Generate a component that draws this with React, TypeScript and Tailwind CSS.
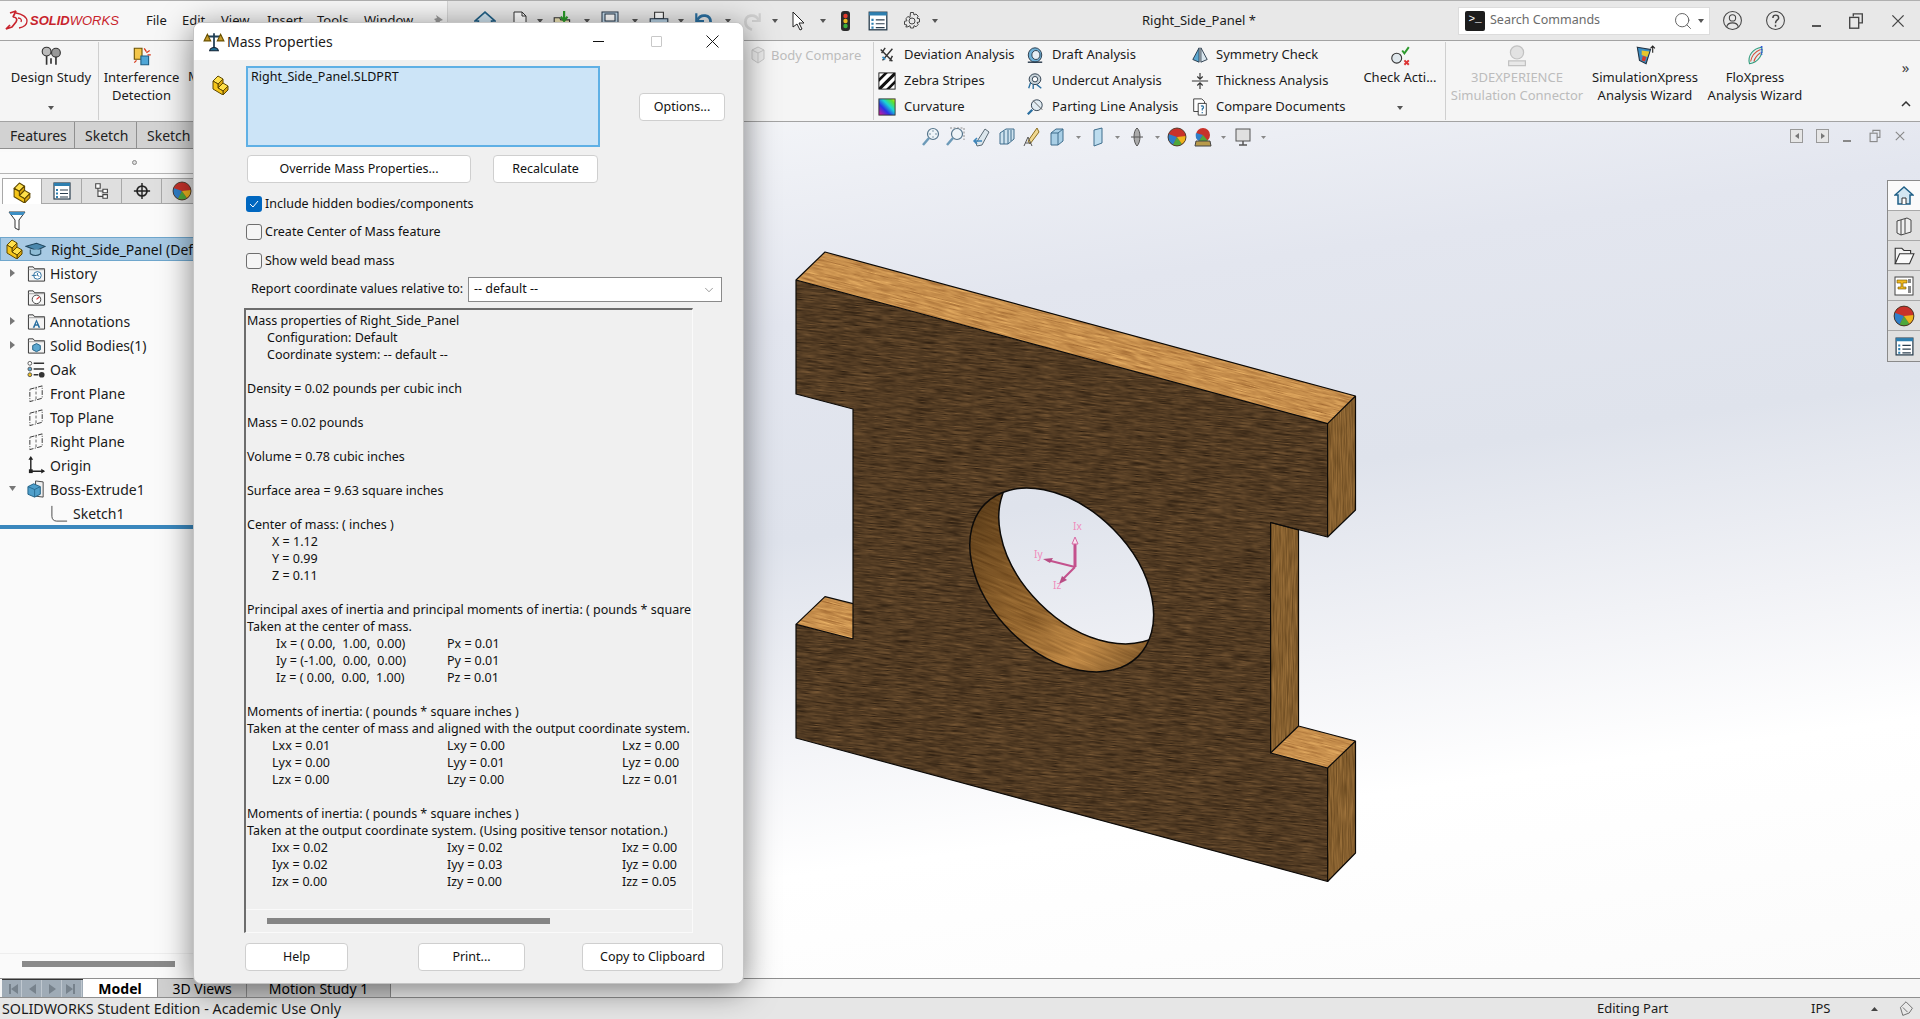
import type { ReactNode } from 'react';
import { ChevronDown, Search } from 'lucide-react';

const Ico = ({ s = 18, children }: { s?: number; children: ReactNode }) => (
  <svg width={s} height={s} viewBox="0 0 20 20" fill="none" className="shrink-0">
    {children}
  </svg>
);

const Caret = () => (
  <svg width="6" height="4" viewBox="0 0 6 4" className="shrink-0">
    <path d="M0 0h6L3 4z" fill="#555" />
  </svg>
);

const PartIcon = ({ s = 18 }: { s?: number }) => (
  <Ico s={s}>
    <g stroke="#5f4800" strokeWidth="1" strokeLinejoin="round">
      <path d="M2 6 7 1l5 3-5 5z" fill="#ffe04a" />
      <path d="M7 9l5-5v4l-5 5z" fill="#dba60f" />
      <path d="M7 13l5-5 5 3-5 5z" fill="#ffe04a" />
      <path d="M12 16l5-5v4l-5 5z" fill="#dba60f" />
      <path d="M2 6l5 3v4l5 3v4L2 14z" fill="#f5c518" />
    </g>
  </Ico>
);

const ListIcon = ({ s = 20 }: { s?: number }) => (
  <Ico s={s}>
    <rect x="2" y="2" width="16" height="16" fill="#fff" stroke="#2b3f4f" strokeWidth="1.2" />
    <rect x="2" y="2" width="16" height="3" fill="#2d7fb0" />
    <path d="M4 8h2v2H4zM4 11.500h2v2H4zM4 15h2v2H4z" fill="#2d7fb0" />
    <path d="M8 9h8M8 12.500h8M8 16h8" stroke="#2b3f4f" strokeWidth="1.1" />
  </Ico>
);

const TreeTabIcon = () => (
  <Ico>
    <path d="M3 2h5v5H3zM11 8h5v4h-5zM11 14h5v4h-5zM5.500 7v9H11M5.500 10H11" stroke="#444" strokeWidth="1.2" fill="#fff" />
  </Ico>
);

const Target = () => (
  <Ico>
    <circle cx="10" cy="10" r="5.500" stroke="#222" strokeWidth="2" />
    <path d="M10 1v18M1 10h18" stroke="#222" strokeWidth="1.6" />
  </Ico>
);

const Ball = ({ s = 20 }: { s?: number }) => (
  <Ico s={s}>
    <circle cx="10" cy="10" r="9" fill="#c8322a" />
    <path d="M10 10 1.500 7A9 9 0 0 0 6 18z" fill="#2f7fc8" />
    <path d="M10 10 6 18a9 9 0 0 0 9-1z" fill="#4fa83b" />
    <path d="M10 10l5 7a9 9 0 0 0 4-8z" fill="#eeb51d" />
    <circle cx="10" cy="10" r="9" stroke="#3a2a1a" strokeWidth=".8" />
  </Ico>
);

const Filter = () => (
  <svg width="18" height="20" viewBox="0 0 18 20">
    <path d="M1 1h16l-6 8v10l-4-2V9z" fill="#fff" stroke="#333" />
    <path d="M1 1h16l-2 3H3z" fill="#3d8fc4" />
  </svg>
);

const Folder = ({ children }: { children?: ReactNode }) => (
  <Ico s={19}>
    <path d="M1.500 18V3h5l1.500 2h10.500v13z" fill="#f4f4f4" stroke="#333" strokeWidth="1" />
    <path d="M1.500 6h17" stroke="#888" strokeWidth=".8" />
    {children}
  </Ico>
);

const Plane = () => (
  <Ico s={19}>
    <path d="M3 5.500 16 2v13L3 18.500z" stroke="#333" strokeWidth="1" strokeDasharray="5 1.500 1 1.500" />
    <path d="M9.500 3v15" stroke="#333" strokeWidth=".8" strokeDasharray="3 2" />
  </Ico>
);

const TreeArrow = ({ open }: { open?: boolean }) => (
  <svg width="7" height="8" viewBox="0 0 7 8">
    {open ? <path d="M0 1h7L3.500 6z" fill="#777" /> : <path d="M1 0l5 4-5 4z" fill="#777" />}
  </svg>
);

const treeRows: { label: string; arrow?: 'open' | 'closed'; icon: ReactNode }[] = [
  {
    label: 'History',
    arrow: 'closed',
    icon: (
      <Folder>
        <circle cx="11" cy="12" r="4" fill="#fff" stroke="#2a6fa0" />
        <path d="M5 12h5M11 9.500V12l2 1" stroke="#2a6fa0" />
      </Folder>
    ),
  },
  {
    label: 'Sensors',
    icon: (
      <Folder>
        <circle cx="10" cy="12" r="4.500" fill="#fff" stroke="#444" />
        <path d="M10 12l3-2.500" stroke="#d33" strokeWidth="1.300" />
      </Folder>
    ),
  },
  {
    label: 'Annotations',
    arrow: 'closed',
    icon: (
      <Folder>
        <path d="M10 7.500 6 16.500h2l.7-2h2.600l.7 2h2zM9.300 13l.7-2.500.7 2.500z" fill="#2a6fa0" />
      </Folder>
    ),
  },
  {
    label: 'Solid Bodies(1)',
    arrow: 'closed',
    icon: (
      <Folder>
        <path d="M10 8l4 2v4.500l-4 2-4-2V10z" fill="#5ba6cf" stroke="#1e5f85" />
      </Folder>
    ),
  },
  {
    label: 'Oak',
    icon: (
      <Ico s={19}>
        <circle cx="3" cy="3.500" r="2" fill="#fff" stroke="#555" />
        <circle cx="3" cy="9.500" r="2" fill="#5ba6cf" stroke="#555" />
        <circle cx="3" cy="15.500" r="2" fill="#f2c21e" stroke="#555" />
        <path d="M7 3.500h11M7 9.500h11M7 15.500h5" stroke="#333" strokeWidth="1.500" />
        <circle cx="15.500" cy="15.500" r="3" fill="#333" />
      </Ico>
    ),
  },
  { label: 'Front Plane', icon: <Plane /> },
  { label: 'Top Plane', icon: <Plane /> },
  { label: 'Right Plane', icon: <Plane /> },
  {
    label: 'Origin',
    icon: (
      <Ico s={19}>
        <path d="M4 2v14h14" stroke="#222" strokeWidth="1.500" />
        <path d="M4 0l2.500 4h-5zM19 16l-4 2.500v-5z" fill="#222" />
        <rect x="2" y="14" width="4" height="4" fill="#222" />
      </Ico>
    ),
  },
  {
    label: 'Boss-Extrude1',
    arrow: 'open',
    icon: (
      <Ico s={19}>
        <path d="M9 1l8 1v16l-8-1z" fill="#eee" stroke="#444" />
        <path d="M7 4l7 3v8l-6 3-7-3V7z" fill="#4f9fca" stroke="#1e5f85" />
        <path d="M1 7l7 3 6-3M8 10v8" stroke="#1e5f85" strokeWidth=".8" />
      </Ico>
    ),
  },
];

const tabs3 = ['Features', 'Sketch', 'Sketch'];

const LeftPanel = () => (
  <div className="relative flex w-[300px] shrink-0 flex-col bg-[#fafafa] text-[14px]">
    <div className="flex h-[27px] shrink-0 border-b border-[#8f8f8f] bg-[#d2d2d2] text-[#222]">
      {tabs3.map((t, i) => (
        <div
          key={i}
          className={`flex items-center border-r border-[#8f8f8f] pl-[10px] ${i === 0 ? 'w-[75px]' : 'w-[62px]'}`}
        >
          {t}
        </div>
      ))}
    </div>
    <div className="mt-[3px] flex h-[22px] shrink-0 items-center border-b border-[#b4b4b4] bg-[#fbfbfb] pl-[132px]">
      <div className="h-[5px] w-[5px] rounded-full border border-[#888] bg-[#ddd]" />
    </div>
    <div className="mt-[4px] flex h-[26px] shrink-0 pl-[2px]">
      <div className="flex w-[40px] items-center justify-center border-r border-t border-l border-[#a8a8a8] bg-white pt-[1px]">
        <PartIcon s={21} />
      </div>
      {[<ListIcon key="l" />, <TreeTabIcon key="t" />, <Target key="c" />, <Ball key="b" />].map((ic, i) => (
        <div key={i} className="flex w-[40px] items-center justify-center border-t border-r border-b border-[#a8a8a8] bg-[#dfdfdf]">
          {ic}
        </div>
      ))}
    </div>
    <div className="flex h-[33px] shrink-0 items-center pl-[8px]">
      <Filter />
    </div>
    <div className="flex h-[24px] shrink-0 items-center border border-[#6fa6cc] bg-[#a8cae4] pl-[4px] text-[#111]">
      <PartIcon s={20} />
      <Ico s={21}>
        <path d="M1 7l10-3 8 3-8 4z" fill="#4b88ad" stroke="#22485f" />
        <path d="M5 10v4c3 2 7 2 10 0v-4" stroke="#22485f" fill="#8fbcd6" />
      </Ico>
      <span className="ml-[5px] whitespace-nowrap">Right_Side_Panel (Default&lt;&lt;Default&gt;_Display)</span>
    </div>
    <div className="flex flex-col">
      {treeRows.map((r) => (
        <div key={r.label} className="flex h-[24px] items-center text-[#1b1b1b]">
          <div className="flex w-[27px] justify-center pr-[3px]">
            {r.arrow && <TreeArrow open={r.arrow === 'open'} />}
          </div>
          <div className="flex w-[23px]">{r.icon}</div>
          <span>{r.label}</span>
        </div>
      ))}
      <div className="flex h-[24px] items-center pl-[50px] text-[#1b1b1b]">
        <Ico s={19}>
          <path d="M2 2v11c0 3 2 5 5 5h11" stroke="#444" strokeWidth="1" />
        </Ico>
        <span className="ml-[4px]">Sketch1</span>
      </div>
    </div>
    <div className="h-[4px] shrink-0 bg-[#3a87bd]" />
    <div className="mt-auto mb-[5px] flex h-[20px] shrink-0 items-center border-t border-[#eee] pl-[22px]">
      <div className="h-[6px] w-[153px] bg-[#8a8a8a]" />
    </div>
  </div>
);

const RibbonStack = ({
  w,
  lines,
  icon,
  gray,
  dropdown,
  pl,
}: {
  w: string;
  lines: string[];
  icon: ReactNode;
  gray?: boolean;
  dropdown?: boolean;
  pl?: string;
}) => (
  <div className={`flex h-full shrink-0 flex-col items-center pt-[3px] ${w} ${pl ?? ''} ${gray ? 'text-[#bcbcbc]' : 'text-[#1b1b1b]'}`}>
    <div className="flex h-[24px] items-center">{icon}</div>
    {lines.map((l) => (
      <div key={l} className="whitespace-nowrap leading-[18px]">
        {l}
      </div>
    ))}
    {dropdown && (
      <div className="mt-auto mb-[11px]">
        <Caret />
      </div>
    )}
  </div>
);

const RibbonRow = ({ icon, label, gap }: { icon: ReactNode; label: string; gap: string }) => (
  <div className={`flex h-[26px] items-center whitespace-nowrap pl-[4px] ${gap}`}>
    {icon}
    <span>{label}</span>
  </div>
);

const Sep = () => <div className="my-[1px] w-px shrink-0 bg-[#cfcfcf]" />;

const Ribbon = () => (
  <div className="flex h-[82px] shrink-0 border-b border-t border-[#a3a3a3] bg-[#f5f5f5]">
    <RibbonStack
      w="w-[98px]"
      pl="pl-[4px]"
      lines={['Design Study']}
      dropdown
      icon={
        <Ico s={22}>
          <circle cx="6" cy="6" r="4" fill="#bbb" stroke="#333" />
          <circle cx="14.500" cy="7" r="4" fill="#999" stroke="#333" />
          <path d="M6 10v8M14.500 11v7M10 12v5" stroke="#333" strokeWidth="1.500" />
        </Ico>
      }
    />
    <Sep />
    <RibbonStack
      w="w-[85px]"
      lines={['Interference', 'Detection']}
      icon={
        <Ico s={22}>
          <path d="M3 3h7v10H3z" fill="#f3c64a" stroke="#6b5200" />
          <path d="M9 10h7v8H9z" fill="#4fa6d6" stroke="#1e5f85" />
          <path d="M12 3l2 3M17 5l-3 2M3 16l2-2M18 9h-3" stroke="#d83a1c" strokeWidth="1.200" />
        </Ico>
      }
    />
    <div className="w-[564px] shrink-0 pt-[26px] pl-[4px] text-[#1b1b1b]">Mass</div>
    <div className="flex w-[125px] shrink-0 items-start pt-[4px] text-[#bcbcbc]">
      <Ico s={20}>
        <path d="M4 5l6-3 6 3v9l-6 4-6-4z" stroke="#c9c9c9" fill="#ececec" />
        <path d="M4 5l6 3 6-3M10 8v10" stroke="#c9c9c9" />
      </Ico>
      <span className="ml-[3px] whitespace-nowrap leading-[20px]">Body Compare</span>
    </div>
    <Sep />
    <div className="w-[148px] shrink-0 pt-[1px] text-[#1b1b1b]">
      <RibbonRow
        gap="gap-[8px]"
        label="Deviation Analysis"
        icon={
          <Ico>
            <path d="M3 4l13 13M16 3 5 16M8 2l-4 6M16 11l-3 6" stroke="#333" strokeWidth="1.600" />
            <path d="M5 12l3 3" stroke="#3d8fc4" strokeWidth="2" />
          </Ico>
        }
      />
      <RibbonRow
        gap="gap-[8px]"
        label="Zebra Stripes"
        icon={
          <Ico>
            <rect x="1" y="1" width="18" height="18" fill="#fff" stroke="#111" />
            <path d="M1 7 7 1h4L1 11zM1 17 17 1h2v3L4 19H1zM9 19 19 9v4l-6 6z" fill="#111" />
          </Ico>
        }
      />
      <RibbonRow
        gap="gap-[8px]"
        label="Curvature"
        icon={
          <svg width="18" height="18" viewBox="0 0 20 20" className="shrink-0">
            <defs>
              <linearGradient id="curv" x1="0" y1="1" x2="1" y2="0">
                <stop offset="0" stopColor="#e4168f" />
                <stop offset=".35" stopColor="#2a33e6" />
                <stop offset=".6" stopColor="#19d6d6" />
                <stop offset=".85" stopColor="#5fe22a" />
                <stop offset="1" stopColor="#f2e51d" />
              </linearGradient>
            </defs>
            <rect x="1" y="1" width="18" height="18" fill="url(#curv)" stroke="#333" />
          </svg>
        }
      />
    </div>
    <div className="w-[165px] shrink-0 pt-[1px] text-[#1b1b1b]">
      <RibbonRow
        gap="gap-[8px]"
        label="Draft Analysis"
        icon={
          <Ico>
            <ellipse cx="10" cy="10" rx="7.500" ry="8" fill="#6fb0d6" stroke="#234" />
            <ellipse cx="11" cy="10" rx="4.500" ry="5" fill="#e6eef4" stroke="#234" />
            <path d="M2 18h16" stroke="#234" strokeWidth="1.500" />
          </Ico>
        }
      />
      <RibbonRow
        gap="gap-[8px]"
        label="Undercut Analysis"
        icon={
          <Ico>
            <ellipse cx="10" cy="8" rx="6.500" ry="6" fill="#c9d4da" stroke="#234" />
            <ellipse cx="10" cy="8" rx="3" ry="3" fill="#fff" stroke="#234" />
            <path d="M5 12l-2 6M12 14l5 4M8 14v5" stroke="#2a6fa0" strokeWidth="1.500" />
          </Ico>
        }
      />
      <RibbonRow
        gap="gap-[8px]"
        label="Parting Line Analysis"
        icon={
          <Ico>
            <circle cx="12" cy="8" r="6" fill="#e2ecf2" stroke="#234" />
            <path d="M7 13l-5 5" stroke="#2a6fa0" strokeWidth="2.500" />
            <path d="M8 3l10 10" stroke="#555" />
          </Ico>
        }
      />
    </div>
    <div className="w-[168px] shrink-0 pt-[1px] text-[#1b1b1b]">
      <RibbonRow
        gap="gap-[7px]"
        label="Symmetry Check"
        icon={
          <Ico>
            <path d="M9 2v16L2 15z" fill="#5ba6cf" stroke="#234" />
            <path d="M11 2v16l7-3z" fill="#d9e6ee" stroke="#234" />
          </Ico>
        }
      />
      <RibbonRow
        gap="gap-[7px]"
        label="Thickness Analysis"
        icon={
          <Ico>
            <path d="M10 1v6M7 5l3 3 3-3M10 19v-6M7 15l3-3 3 3" stroke="#333" strokeWidth="1.300" />
            <path d="M1 9h18v2H1z" fill="#888" />
          </Ico>
        }
      />
      <RibbonRow
        gap="gap-[7px]"
        label="Compare Documents"
        icon={
          <Ico>
            <path d="M3 1h9l3 3v11H3z" fill="#fff" stroke="#333" />
            <path d="M8 6h9v13H8z" fill="#fff" stroke="#333" />
            <path d="M11 9c3-1 4 2 1.500 3v2M12.500 15.500v1.500" stroke="#2a6fa0" strokeWidth="1.300" />
          </Ico>
        }
      />
    </div>
    <RibbonStack
      w="w-[90px]"
      lines={['Check Acti...']}
      dropdown
      icon={
        <Ico s={22}>
          <circle cx="7" cy="12" r="4.500" fill="#dfe7ec" stroke="#333" />
          <path d="M12 5l2 2.500 4-5.500" stroke="#2d9a2d" strokeWidth="1.800" />
          <path d="M14 14l4 4M18 14l-4 4" stroke="#d33" strokeWidth="1.800" />
        </Ico>
      }
    />
    <Sep />
    <RibbonStack
      w="w-[142px]"
      gray
      lines={['3DEXPERIENCE', 'Simulation Connector']}
      icon={
        <Ico s={24}>
          <circle cx="10" cy="7" r="5.500" fill="#e2e2e2" stroke="#c2c2c2" />
          <path d="M3 14h14v4H3z" fill="#e8e8e8" stroke="#c2c2c2" />
        </Ico>
      }
    />
    <RibbonStack
      w="w-[114px]"
      lines={['SimulationXpress', 'Analysis Wizard']}
      icon={
        <Ico s={22}>
          <path d="M3 2l12 2-4 13-6-3z" fill="#3d8fc4" stroke="#234" />
          <path d="M7 5l7 1-2 5-5-2z" fill="#e8c62a" />
          <path d="M8 10l3 1-1 4-3-1z" fill="#d63a2a" />
          <path d="M17 1v6M15 3l2-2 2 2" stroke="#222" />
        </Ico>
      }
    />
    <RibbonStack
      w="w-[106px]"
      lines={['FloXpress', 'Analysis Wizard']}
      icon={
        <Ico s={22}>
          <path d="M5 17C3 10 8 3 16 2c2 6-3 14-11 15z" fill="#dff0f2" stroke="#2f9a7a" />
          <path d="M6 15C7 9 10 6 15 4M9 15c1-4 3-6 6-8" stroke="#d8503a" />
          <path d="M16 1v8" stroke="#3355dd" strokeDasharray="1.500 1" strokeWidth="1.500" />
        </Ico>
      }
    />
    <div className="ml-auto flex w-[28px] shrink-0 flex-col items-center pt-[18px] pr-[1px] text-[#444]">
      <span className="text-[15px] leading-[16px]">»</span>
      <svg width="10" height="6" viewBox="0 0 10 6" className="mt-[26px]">
        <path d="M1 5l4-4 4 4" stroke="#333" strokeWidth="1.500" fill="none" />
      </svg>
    </div>
  </div>
);

const Box = ({ w, children }: { w: string; children?: ReactNode }) => (
  <div className={`flex shrink-0 items-center justify-center ${w}`}>{children}</div>
);

const TopBar = () => (
  <div className="flex h-[40px] shrink-0 border-t border-[#b0b0b0] bg-[#e8e8e8] text-[#1a1a1a]">
    <div className="flex h-full w-[448px] shrink-0 items-center border-r border-[#d4d4d4] bg-[#f7f7f7] pl-[5px]">
      <div className="flex w-[141px] shrink-0 items-center text-[#c8232c]">
        <svg width="23" height="21" viewBox="0 0 23 21" className="shrink-0">
          <path d="M5 3 11 1 8 7c3 0 5 2 3 5l-4 5-6 2 4-4" stroke="#c8232c" strokeWidth="1.700" fill="none" strokeLinejoin="bevel" />
          <path d="M11 3c6 1 11 4 11 8 0 3-3 6-8 7" stroke="#c8232c" strokeWidth="1.300" fill="none" />
          <path d="M13 8c3 0 4 2 3 4" stroke="#c8232c" strokeWidth="1.300" fill="none" />
        </svg>
        <span className="ml-[2px] text-[13px] leading-none font-['Liberation_Sans',sans-serif] font-bold italic">SOLID</span>
        <span className="text-[13px] leading-none font-['Liberation_Sans',sans-serif] italic">WORKS</span>
      </div>
      {['File', 'Edit', 'View', 'Insert', 'Tools', 'Window'].map((m, i) => (
        <span key={m} className={['w-[36px]', 'w-[39px]', 'w-[46px]', 'w-[50px]', 'w-[47px]', 'w-[66px]'][i]}>
          {m}
        </span>
      ))}
      <svg width="14" height="14" viewBox="0 0 14 14" className="shrink-0">
        <path d="M6 1l7 5-3 1-1 3-2-2-5 5 4-6-2-2 3-1z" fill="#9a9a9a" />
      </svg>
    </div>
    <div className="flex h-full flex-1 items-center pl-[19px]">
      <Box w="w-[36px]">
        <Ico s={22}>
          <path d="M10 2 1 10h3v8h12v-8h3z" fill="#cfe3ef" stroke="#1f5f86" strokeWidth="1.500" />
          <path d="M8 18v-5h4v5" stroke="#1f5f86" fill="#fff" />
        </Ico>
      </Box>
      <Box w="w-[34px]">
        <Ico s={20}>
          <path d="M4 1h8l4 4v14H4z" fill="#fff" stroke="#333" />
          <path d="M12 1v4h4" stroke="#333" />
        </Ico>
      </Box>
      <Box w="w-[6px]"><Caret /></Box>
      <Box w="w-[40px]">
        <Ico s={22}>
          <path d="M2 18V7h5l1 2h8v9z" fill="#f1e7b8" stroke="#333" />
          <path d="M11 1v8M8 6l3 4 3-4" stroke="#2a9a2a" strokeWidth="2" />
        </Ico>
      </Box>
      <Box w="w-[8px]"><Caret /></Box>
      <Box w="w-[38px]">
        <Ico s={20}>
          <rect x="2" y="1" width="16" height="18" fill="#c4dced" stroke="#234" />
          <rect x="5" y="3" width="10" height="7" fill="#fff" stroke="#234" />
          <rect x="6" y="13" width="8" height="6" fill="#5a7f9a" />
        </Ico>
      </Box>
      <Box w="w-[11px]"><Caret /></Box>
      <Box w="w-[38px]">
        <Ico s={22}>
          <path d="M6 2h8v6H6z" fill="#fff" stroke="#333" />
          <path d="M2 8h16v7H2z" fill="#b8d2e4" stroke="#234" />
          <path d="M5 12h10v6H5z" fill="#fff" stroke="#333" />
        </Ico>
      </Box>
      <Box w="w-[6px]"><Caret /></Box>
      <Box w="w-[40px]">
        <Ico s={22}>
          <path d="M3 3v7h7" stroke="#2a6fa0" strokeWidth="2" />
          <path d="M4 9c3-6 12-5 12 2 0 4-3 6-6 7" stroke="#2a6fa0" strokeWidth="2.500" />
        </Ico>
      </Box>
      <Box w="w-[8px]"><Caret /></Box>
      <Box w="w-[40px]">
        <Ico s={22}>
          <path d="M17 3v7h-7" stroke="#cfcfcf" strokeWidth="2" />
          <path d="M16 9c-3-6-12-5-12 2 0 4 3 6 6 7" stroke="#cfcfcf" strokeWidth="2.500" />
        </Ico>
      </Box>
      <Box w="w-[6px]"><Caret /></Box>
      <Box w="w-[40px]">
        <Ico s={20}>
          <path d="M5 1v15l4-3 3 6 2-1-3-6h5z" fill="#fff" stroke="#222" />
        </Ico>
      </Box>
      <Box w="w-[10px]"><Caret /></Box>
      <Box w="w-[34px]">
        <svg width="9" height="20" viewBox="0 0 9 20">
          <rect width="9" height="20" rx="3" fill="#2b2b2b" />
          <circle cx="4.500" cy="5" r="2.200" fill="#e23b2c" />
          <circle cx="4.500" cy="10" r="2.200" fill="#e8b81e" />
          <circle cx="4.500" cy="15" r="2.200" fill="#3cae3c" />
        </svg>
      </Box>
      <Box w="w-[32px]"><ListIcon s={22} /></Box>
      <Box w="w-[36px]">
        <Ico s={20}>
          <circle cx="10" cy="10" r="3" stroke="#444" />
          <path
            d="M8.500 1.500h3l.5 2.500 2-1 2.200 2.200-1.200 2 2.500.6v3.200l-2.500.5 1.200 2-2.200 2.300-2-1.200-.5 2.400h-3l-.5-2.400-2 1.200L3.800 16l1.200-2-2.500-.5v-3.200L5 9.700 3.800 7.700 6 5.500l2 1z"
            stroke="#444"
          />
        </Ico>
      </Box>
      <Box w="w-[10px]"><Caret /></Box>
      <div className="flex-1 text-center whitespace-nowrap">Right_Side_Panel *</div>
      <div className="flex h-[28px] w-[252px] shrink-0 items-center border border-[#dcdcdc] bg-white pl-[6px] text-[#6b6b6b]">
        <div className="flex h-[20px] w-[20px] shrink-0 items-center justify-center rounded-[2px] bg-[#1d1d1d] pb-[2px] text-[11px] leading-none font-['Liberation_Mono',monospace] text-white">
          &gt;_
        </div>
        <span className="ml-[5px] flex-1 text-[12.5px]">Search Commands</span>
        <Search size={20} strokeWidth={1.200} color="#666" />
        <div className="mx-[5px]"><Caret /></div>
      </div>
      <Box w="w-[44px]">
        <Ico s={21}>
          <circle cx="10" cy="10" r="8.500" stroke="#444" />
          <circle cx="10" cy="7.500" r="3" stroke="#444" />
          <path d="M4.500 16c1-5 10-5 11 0" stroke="#444" />
        </Ico>
      </Box>
      <Box w="w-[42px]">
        <Ico s={21}>
          <circle cx="10" cy="10" r="8.500" stroke="#444" />
          <path d="M7.500 7.500c0-3.500 5.500-3.500 5.500 0 0 2-3 2-3 5M10 14v2" stroke="#444" strokeWidth="1.400" />
        </Ico>
      </Box>
      <Box w="w-[40px]">
        <div className="mt-[10px] h-[2px] w-[9px] bg-[#555]" />
      </Box>
      <Box w="w-[40px]">
        <Ico s={18}>
          <path d="M7 5V2h10v10h-4" stroke="#444" strokeWidth="1.500" />
          <rect x="3" y="6" width="10" height="12" stroke="#444" strokeWidth="1.500" />
        </Ico>
      </Box>
      <Box w="w-[44px]">
        <Ico s={16}>
          <path d="M3 3l14 14M17 3 3 17" stroke="#444" strokeWidth="1.600" />
        </Ico>
      </Box>
    </div>
  </div>
);

const Part = () => (
  <svg viewBox="300 122 1620 856" className="absolute inset-0 h-full w-full">
    <defs>
      <filter id="woodFront" x="0" y="0" width="100%" height="100%" colorInterpolationFilters="sRGB">
        <feTurbulence type="fractalNoise" baseFrequency="0.05 1.1" numOctaves="3" seed="4" />
        <feColorMatrix values="0.42 0 0 0 0.11  0.32 0 0 0 0.07  0.2 0 0 0 0.035  0 0 0 0 1" />
      </filter>
      <filter id="woodTop" x="0" y="0" width="100%" height="100%" colorInterpolationFilters="sRGB">
        <feTurbulence type="fractalNoise" baseFrequency="0.04 0.9" numOctaves="3" seed="9" />
        <feColorMatrix values="0.42 0 0 0 0.57  0.42 0 0 0 0.35  0.3 0 0 0 0.15  0 0 0 0 1" />
      </filter>
      <filter id="woodSide" x="0" y="0" width="100%" height="100%" colorInterpolationFilters="sRGB">
        <feTurbulence type="fractalNoise" baseFrequency="0.8 0.04" numOctaves="2" seed="6" />
        <feColorMatrix values="0.3 0 0 0 0.37  0.24 0 0 0 0.25  0.16 0 0 0 0.1  0 0 0 0 1" />
      </filter>
      <filter id="woodHole" x="0" y="0" width="100%" height="100%" colorInterpolationFilters="sRGB">
        <feTurbulence type="fractalNoise" baseFrequency="0.03 0.45" numOctaves="2" seed="2" />
        <feColorMatrix values="0.4 0 0 0 0.45  0.34 0 0 0 0.28  0.22 0 0 0 0.1  0 0 0 0 1" />
      </filter>
      <linearGradient id="holeLight" x1="960" y1="500" x2="1150" y2="680" gradientUnits="userSpaceOnUse">
        <stop offset="0" stopColor="#2e1c08" stopOpacity=".7" />
        <stop offset=".45" stopColor="#4a2f10" stopOpacity=".25" />
        <stop offset=".72" stopColor="#e2a55a" stopOpacity=".35" />
        <stop offset="1" stopColor="#2e1c08" stopOpacity=".65" />
      </linearGradient>
      <clipPath id="frontClip">
        <path d="M796 280 1327.600 423.600V537L1270.600 522.500V753L1327.600 768V881.500L796 738V624.400L853 639V409L796 394Z" />
      </clipPath>
      <clipPath id="topClip">
        <path d="M796 280 825 252 1355.500 396 1327.600 423.600ZM796 624.400 825 596.600 853 603.700V639ZM1270.600 753 1298.500 726 1355.500 741 1327.600 768Z" />
      </clipPath>
      <clipPath id="sideClip">
        <path d="M1327.600 423.600 1355.500 396V510L1327.600 537ZM1327.600 768 1355.500 741V853L1327.600 881.500ZM1270.600 522.500 1298.500 530V726L1270.600 753Z" />
      </clipPath>
      <clipPath id="outerClip">
        <ellipse cx="1061.700" cy="580" rx="108" ry="72.400" transform="rotate(45 1061.700 580)" />
      </clipPath>
      <mask id="punchOuter" maskUnits="userSpaceOnUse" x="700" y="200" width="800" height="800">
        <rect x="700" y="200" width="800" height="800" fill="#fff" />
        <ellipse cx="1061.700" cy="580" rx="108" ry="72.400" transform="rotate(45 1061.700 580)" fill="#000" />
      </mask>
      <mask id="punchInner" maskUnits="userSpaceOnUse" x="700" y="200" width="800" height="800">
        <rect x="700" y="200" width="800" height="800" fill="#fff" />
        <ellipse cx="1090.700" cy="552" rx="108" ry="72.400" transform="rotate(45 1090.700 552)" fill="#000" />
      </mask>
    </defs>

    <g clipPath="url(#topClip)">
      <rect x="700" y="100" width="800" height="800" filter="url(#woodTop)" transform="rotate(14 1075 400)" />
    </g>
    <g clipPath="url(#sideClip)">
      <rect x="1200" y="350" width="200" height="560" filter="url(#woodSide)" />
    </g>
    <g mask="url(#punchOuter)">
      <g clipPath="url(#frontClip)">
        <rect x="650" y="100" width="900" height="900" filter="url(#woodFront)" transform="rotate(5 1075 580)" />
      </g>
    </g>
    <g clipPath="url(#outerClip)">
      <g mask="url(#punchInner)">
        <rect x="900" y="430" width="340" height="300" filter="url(#woodHole)" transform="rotate(22 1060 580)" />
        <rect x="940" y="470" width="240" height="230" fill="url(#holeLight)" />
      </g>
    </g>

    <g fill="none" stroke="#0c0a08" strokeWidth="1.200" strokeLinejoin="round">
      <path d="M796 280 1327.600 423.600V537L1270.600 522.500V753L1327.600 768V881.500L796 738V624.400L853 639V409L796 394Z" />
      <path d="M796 280 825 252 1355.500 396 1327.600 423.600M1355.500 396V510L1327.600 537" />
      <path d="M1270.600 522.500 1298.500 530V726L1270.600 753M1298.500 726 1355.500 741 1327.600 768M1355.500 741V853L1327.600 881.500" />
      <path d="M796 624.400 825 596.600 853 603.700" />
      <ellipse cx="1061.700" cy="580" rx="108" ry="72.400" transform="rotate(45 1061.700 580)" strokeWidth="1.500" />
    </g>
    <g clipPath="url(#outerClip)">
      <ellipse cx="1090.700" cy="552" rx="108" ry="72.400" transform="rotate(45 1090.700 552)" fill="none" stroke="#0c0a08" strokeWidth="1.500" />
    </g>

    <g stroke="#c4518d" fill="none">
      <path d="M1075 567V543" strokeWidth="3" />
      <path d="M1075 567 1047 560" strokeWidth="2.200" />
      <path d="M1075 567 1062 580" strokeWidth="2.200" />
    </g>
    <path d="M1075 537l-3 7h6z" fill="#f9e3ef" stroke="#d76aa4" />
    <path d="M1043 559l10-1-3 5z" fill="#b84d84" />
    <path d="M1059 584l3-8 5 4z" fill="#b84d84" />
    <g fill="#f08cbc" fontSize="10" fontFamily="Noto Sans, sans-serif">
      <text x="1073" y="530">Ix</text>
      <text x="1034" y="558">Iy</text>
      <text x="1053" y="589">Iz</text>
    </g>
  </svg>
);

const Magnifier = ({ children }: { children?: ReactNode }) => (
  <Ico s={20}>
    <circle cx="12" cy="7" r="5.500" fill="#eef4f8" stroke="#54748b" strokeWidth="1.200" />
    <path d="M8 11l-6 7" stroke="#6c9ab8" strokeWidth="2.500" />
    {children}
  </Ico>
);

const HudCaret = ({ w }: { w: string }) => (
  <Box w={w}>
    <svg width="5" height="3" viewBox="0 0 5 3">
      <path d="M0 0h5L2.500 3z" fill="#888" />
    </svg>
  </Box>
);

const HeadsUp = () => (
  <div className="absolute top-[5px] left-[619px] flex h-[20px] items-center">
    <Box w="w-[23px]">
      <Magnifier>
        <path d="M12 3.500v1M12 9.500v1M8.500 7h1M14.500 7h1" stroke="#54748b" strokeWidth="1.300" />
      </Magnifier>
    </Box>
    <Box w="w-[26px]">
      <Magnifier>
        <path d="M5 1h14v12" stroke="#777" strokeWidth=".8" strokeDasharray="2 1.500" />
      </Magnifier>
    </Box>
    <Box w="w-[26px]">
      <Ico s={20}>
        <path d="M5 16 14 2l4 3-7 13-5 1z" fill="#dce6ec" stroke="#5a6a74" />
        <path d="M11 14H3M6 11l-3 3 3 3" stroke="#3d86bb" strokeWidth="1.500" />
      </Ico>
    </Box>
    <Box w="w-[25px]">
      <Ico s={20}>
        <path d="M3 6l6-4h8v10l-6 5H3z" fill="#cfe3ef" stroke="#3f6d8c" />
        <path d="M7 4v13M11 3v14M14 3v11" stroke="#3f6d8c" />
      </Ico>
    </Box>
    <Box w="w-[26px]">
      <Ico s={20}>
        <path d="M15 1 6 14l2 3 9-12z" fill="#f0d890" stroke="#8a6d20" />
        <path d="M2 19l4-9 4 9M3.500 16h5" stroke="#555" />
      </Ico>
    </Box>
    <Box w="w-[24px]">
      <Ico s={20}>
        <path d="M4 6l5-4h7v12l-5 4H4z" fill="#a9cfe6" stroke="#3f6d8c" />
        <path d="M4 6h7v12M11 6l5-4" stroke="#3f6d8c" />
      </Ico>
    </Box>
    <HudCaret w="w-[18px]" />
    <Box w="w-[23px]">
      <Ico s={20}>
        <path d="M5 3l8-2v15l-8 3z" fill="#bcdcee" stroke="#3f6d8c" />
      </Ico>
    </Box>
    <HudCaret w="w-[14px]" />
    <Box w="w-[26px]">
      <Ico s={20}>
        <path d="M10 1c-4 3-4 14 0 18 4-4 4-15 0-18z" fill="#aaa" stroke="#555" />
        <path d="M4 10h12" stroke="#555" />
      </Ico>
    </Box>
    <HudCaret w="w-[14px]" />
    <Box w="w-[26px]"><Ball s={20} /></Box>
    <Box w="w-[26px]">
      <Ico s={20}>
        <circle cx="10" cy="8" r="7" fill="#c8322a" />
        <path d="M10 8 3 6a7 7 0 0 0 3 8z" fill="#2f7fc8" />
        <path d="M10 8l-4 6a7 7 0 0 0 9 0z" fill="#4fa83b" />
        <path d="M3 14l-1 5h16l-1-5z" fill="#b89a4a" stroke="#444" />
      </Ico>
    </Box>
    <HudCaret w="w-[14px]" />
    <Box w="w-[26px]">
      <Ico s={20}>
        <rect x="3" y="2" width="14" height="12" fill="#e0e0e0" stroke="#555" />
        <path d="M10 14v4M6 18h8" stroke="#555" strokeWidth="1.500" />
      </Ico>
    </Box>
    <HudCaret w="w-[14px]" />
  </div>
);

const DocButtons = () => (
  <div className="absolute top-[7px] right-[14px] flex items-center">
    <div className="flex h-[14px] w-[13px] items-center justify-center border border-[#999] bg-[#e6e6e6]">
      <svg width="4" height="6" viewBox="0 0 4 6"><path d="M4 0v6L0 3z" fill="#777" /></svg>
    </div>
    <div className="ml-[13px] flex h-[14px] w-[13px] items-center justify-center border border-[#999] bg-[#e6e6e6]">
      <svg width="4" height="6" viewBox="0 0 4 6"><path d="M0 0v6l4-3z" fill="#777" /></svg>
    </div>
    <div className="mt-[10px] ml-[14px] h-[2px] w-[8px] bg-[#888]" />
    <div className="ml-[17px]">
      <Ico s={14}>
        <path d="M7 5V2h10v10h-4" stroke="#888" strokeWidth="1.600" />
        <rect x="3" y="6" width="10" height="12" stroke="#888" strokeWidth="1.600" />
      </Ico>
    </div>
    <div className="ml-[12px]">
      <Ico s={12}>
        <path d="M3 3l14 14M17 3 3 17" stroke="#888" strokeWidth="1.800" />
      </Ico>
    </div>
  </div>
);

const TaskPane = () => (
  <div className="absolute top-[58px] right-0 flex w-[33px] flex-col border-b border-l border-t border-[#8a8a8a]">
    <div className="flex h-[30px] items-center justify-center border-b border-[#a8a8a8] bg-[#fafafa]">
      <Ico s={20}>
        <path d="M10 1 1 9h3v9h12V9h3z" fill="#d3e6f1" stroke="#1f5f86" strokeWidth="1.500" />
        <path d="M8 18v-6h4v6" stroke="#333" fill="#fff" />
      </Ico>
    </div>
    <div className="flex h-[30px] items-center justify-center border-b border-[#a8a8a8] bg-[#e0e0e0]">
      <Ico s={20}>
        <path d="M3 5l10-3 4 2v12l-10 3-4-2z" fill="#f0f0f0" stroke="#444" />
        <path d="M7 4v15M11 3v14" stroke="#444" />
      </Ico>
    </div>
    <div className="flex h-[30px] items-center justify-center border-b border-[#a8a8a8] bg-[#e0e0e0]">
      <Ico s={22}>
        <path d="M2 17V3h6l2 2h6v3" stroke="#333" fill="#f3f3f3" />
        <path d="M2 17 6 8h13l-4 9z" fill="#fafafa" stroke="#333" />
      </Ico>
    </div>
    <div className="flex h-[30px] items-center justify-center border-b border-[#a8a8a8] bg-[#e0e0e0]">
      <Ico s={20}>
        <rect x="1" y="1" width="18" height="18" fill="#fff" stroke="#444" />
        <path d="M3 4h10v3H9v4h3v2H4v-2h3V7H3z" fill="#f1b81e" stroke="#6b5200" strokeWidth=".6" />
        <path d="M14 3h3v4h-3zM14 10h3v7h-3z" fill="#888" />
      </Ico>
    </div>
    <div className="flex h-[30px] items-center justify-center border-b border-[#a8a8a8] bg-[#e0e0e0]">
      <Ball s={22} />
    </div>
    <div className="flex h-[30px] items-center justify-center bg-[#e0e0e0]">
      <ListIcon s={21} />
    </div>
  </div>
);

const DlgBtn = ({ w, label }: { w: string; label: string }) => (
  <div className={`flex h-[28px] shrink-0 items-center justify-center rounded-[4px] border border-[#cfcfcf] bg-white ${w}`}>
    {label}
  </div>
);

const Check = ({ label, checked, mt }: { label: string; checked?: boolean; mt: string }) => (
  <div className={`flex h-[16px] items-center ${mt}`}>
    {checked ? (
      <div className="flex h-[16px] w-[16px] items-center justify-center rounded-[3px] bg-[#0067c0]">
        <svg width="10" height="8" viewBox="0 0 10 8">
          <path d="M1 4l3 3 5-6" stroke="#fff" strokeWidth="1" fill="none" />
        </svg>
      </div>
    ) : (
      <div className="h-[16px] w-[16px] rounded-[3px] border border-[#6e6e6e] bg-[#f5f5f5]" />
    )}
    <span className="ml-[3px]">{label}</span>
  </div>
);

type Line = { t?: string; pl?: string; cols?: string[]; kind?: 'p' | 'm' };

const report: Line[] = [
  { t: 'Mass properties of Right_Side_Panel' },
  { t: 'Configuration: Default', pl: 'pl-[20px]' },
  { t: 'Coordinate system: -- default --', pl: 'pl-[20px]' },
  {},
  { t: 'Density = 0.02 pounds per cubic inch' },
  {},
  { t: 'Mass = 0.02 pounds' },
  {},
  { t: 'Volume = 0.78 cubic inches' },
  {},
  { t: 'Surface area = 9.63 square inches' },
  {},
  { t: 'Center of mass: ( inches )' },
  { t: 'X = 1.12', pl: 'pl-[25px]' },
  { t: 'Y = 0.99', pl: 'pl-[25px]' },
  { t: 'Z = 0.11', pl: 'pl-[25px]' },
  {},
  { t: 'Principal axes of inertia and principal moments of inertia: ( pounds * square' },
  { t: 'Taken at the center of mass.' },
  { kind: 'p', cols: ['Ix = ( 0.00,  1.00,  0.00)', 'Px = 0.01'] },
  { kind: 'p', cols: ['Iy = (-1.00,  0.00,  0.00)', 'Py = 0.01'] },
  { kind: 'p', cols: ['Iz = ( 0.00,  0.00,  1.00)', 'Pz = 0.01'] },
  {},
  { t: 'Moments of inertia: ( pounds * square inches )' },
  { t: 'Taken at the center of mass and aligned with the output coordinate system.' },
  { kind: 'm', cols: ['Lxx = 0.01', 'Lxy = 0.00', 'Lxz = 0.00'] },
  { kind: 'm', cols: ['Lyx = 0.00', 'Lyy = 0.01', 'Lyz = 0.00'] },
  { kind: 'm', cols: ['Lzx = 0.00', 'Lzy = 0.00', 'Lzz = 0.01'] },
  {},
  { t: 'Moments of inertia: ( pounds * square inches )' },
  { t: 'Taken at the output coordinate system. (Using positive tensor notation.)' },
  { kind: 'm', cols: ['Ixx = 0.02', 'Ixy = 0.02', 'Ixz = 0.00'] },
  { kind: 'm', cols: ['Iyx = 0.02', 'Iyy = 0.03', 'Iyz = 0.00'] },
  { kind: 'm', cols: ['Izx = 0.00', 'Izy = 0.00', 'Izz = 0.05'] },
];

const ReportLine = ({ l }: { l: Line }) => {
  if (l.cols && l.kind === 'p')
    return (
      <div className="flex h-[17px] pl-[29px] whitespace-pre">
        <span className="w-[171px]">{l.cols[0]}</span>
        <span>{l.cols[1]}</span>
      </div>
    );
  if (l.cols)
    return (
      <div className="flex h-[17px] pl-[25px] whitespace-pre">
        <span className="w-[175px]">{l.cols[0]}</span>
        <span className="w-[175px]">{l.cols[1]}</span>
        <span>{l.cols[2]}</span>
      </div>
    );
  return <div className={`h-[17px] whitespace-pre ${l.pl ?? ''}`}>{l.t}</div>;
};

const MassDialog = () => (
  <div className="absolute top-[22px] left-[193px] flex h-[962px] w-[551px] flex-col overflow-hidden rounded-[8px] border border-[#c4c4c4] bg-[#f0f0f0] text-[12.5px] text-[#111] shadow-[0_6px_32px_rgba(0,0,0,0.5)]">
    <div className="flex h-[37px] shrink-0 items-center bg-white pl-[9px]">
      <Ico s={22}>
        <path d="M10 2v13M3 5h14" stroke="#1f3f55" strokeWidth="1.600" />
        <path d="M1 9h6l-3-6zM13 9h6l-3-6z" fill="#c49a2a" stroke="#6b5200" />
        <path d="M6 18c1-4 7-4 8 0z" fill="#1f6f96" stroke="#123" />
      </Ico>
      <span className="ml-[2px] flex-1 text-[14px] text-[#1b1b1b]">Mass Properties</span>
      <div className="flex w-[58px] justify-center">
        <div className="h-px w-[11px] bg-[#111]" />
      </div>
      <div className="flex w-[58px] justify-center">
        <div className="h-[11px] w-[11px] rounded-[1px] border border-[#c8c8c8]" />
      </div>
      <div className="flex w-[58px] justify-center pr-[3px]">
        <Ico s={15}>
          <path d="M2 2l16 16M18 2 2 18" stroke="#111" strokeWidth="1.300" />
        </Ico>
      </div>
    </div>
    <div className="flex flex-1 flex-col pl-[52px]">
      <div className="mt-[6px] flex">
        <div className="absolute top-[52px] left-[17px]"><PartIcon s={20} /></div>
        <div className="h-[81px] w-[354px] shrink-0 border-2 border-[#5fb0e5] bg-[#cce4f7] pl-[3px] leading-[17px]">
          Right_Side_Panel.SLDPRT
        </div>
        <div className="mt-[27px] ml-[39px]"><DlgBtn w="w-[86px]" label="Options..." /></div>
      </div>
      <div className="mt-[8px] flex pl-[1px]">
        <DlgBtn w="w-[224px]" label="Override Mass Properties..." />
        <div className="ml-[22px]"><DlgBtn w="w-[105px]" label="Recalculate" /></div>
      </div>
      <Check checked label="Include hidden bodies/components" mt="mt-[13px]" />
      <Check label="Create Center of Mass feature" mt="mt-[12px]" />
      <Check label="Show weld bead mass" mt="mt-[13px]" />
      <div className="mt-[8px] flex h-[25px] items-center pl-[5px]">
        <span className="w-[217px] shrink-0 whitespace-nowrap">Report coordinate values relative to:</span>
        <div className="flex h-[25px] w-[254px] items-center justify-between border border-[#8a8a8a] bg-white px-[5px]">
          <span>-- default --</span>
          <ChevronDown size={14} strokeWidth={1} color="#555" />
        </div>
      </div>
      <div className="mt-[6px] -ml-[2px] flex h-[625px] w-[449px] flex-col border-t-2 border-r border-b border-l-2 border-t-[#6d6d6d] border-r-[#fafafa] border-b-[#fafafa] border-l-[#6d6d6d]">
        <div className="h-[599px] overflow-hidden pt-[2px] pl-[1px]">
          {report.map((l, i) => (
            <ReportLine key={i} l={l} />
          ))}
        </div>
        <div className="flex flex-1 items-center border-t border-[#fafafa] pl-[21px]">
          <div className="h-[6px] w-[283px] bg-[#858585]" />
        </div>
      </div>
      <div className="-ml-[1px] mt-[10px] flex">
        <DlgBtn w="w-[103px]" label="Help" />
        <div className="ml-[70px]"><DlgBtn w="w-[107px]" label="Print..." /></div>
        <div className="ml-[57px]"><DlgBtn w="w-[141px]" label="Copy to Clipboard" /></div>
      </div>
    </div>
  </div>
);

const BottomTabs = () => (
  <div className="flex h-[20px] shrink-0 border-y border-[#8f8f8f] bg-[#f6f6f6] text-[14px]">
    <div className="ml-[2px] flex w-[81px] border-t border-[#333] bg-[#9fabb6]">
      {['M6 0v10H4V0zM6 5l7-5v10z', 'M4 5l7-5v10z', 'M11 5 4 0v10z', 'M8 0v10h2V0zM8 5 1 0v10z'].map((d) => (
        <div key={d} className="flex w-[20px] items-center justify-center border-r border-[#c0c8d0]">
          <svg width="14" height="10" viewBox="0 0 14 10">
            <path d={d} fill="#77828c" />
          </svg>
        </div>
      ))}
    </div>
    <div className="flex w-[75px] items-center justify-center border-r border-[#8f8f8f] bg-white font-bold">Model</div>
    <div className="flex w-[89px] items-center justify-center border-r border-[#8f8f8f] bg-[#d0d0d0]">3D Views</div>
    <div className="flex w-[144px] items-center justify-center border-r border-[#8f8f8f] bg-[#d0d0d0]">Motion Study 1</div>
  </div>
);

const StatusBar = () => (
  <div className="flex h-[21px] shrink-0 items-center bg-[#e6e6e6] pl-[2px] text-[#1a1a1a]">
    <span className="w-[1595px] shrink-0 text-[14.3px]">SOLIDWORKS Student Edition - Academic Use Only</span>
    <span className="w-[214px] shrink-0">Editing Part</span>
    <span className="w-[60px] shrink-0">IPS</span>
    <svg width="7" height="4" viewBox="0 0 7 4" className="shrink-0">
      <path d="M0 4h7L3.500 0z" fill="#444" />
    </svg>
    <div className="ml-[20px]">
      <Ico s={16}>
        <path d="M3 8l7-7 8 8-4 6-8 3z" fill="#e8e8e8" stroke="#555" />
        <path d="M6 8l6 6" stroke="#555" />
      </Ico>
    </div>
  </div>
);

export default function App() {
  return (
    <div className="relative flex h-[1019px] w-[1920px] flex-col overflow-hidden bg-white text-[13px] font-['Noto_Sans','Liberation_Sans',sans-serif]">
      <TopBar />
      <Ribbon />
      <div className="flex h-[856px] shrink-0">
        <LeftPanel />
        <div className="relative flex-1 bg-[linear-gradient(172deg,#f7f8fa_0%,#e3e6ef_25%,#dfe3ec_45%,#f1f2f6_62%,#ffffff_76%,#fbfbfb_100%)]">
          <Part />
          <HeadsUp />
          <DocButtons />
          <TaskPane />
        </div>
      </div>
      <BottomTabs />
      <StatusBar />
      <MassDialog />
    </div>
  );
}
